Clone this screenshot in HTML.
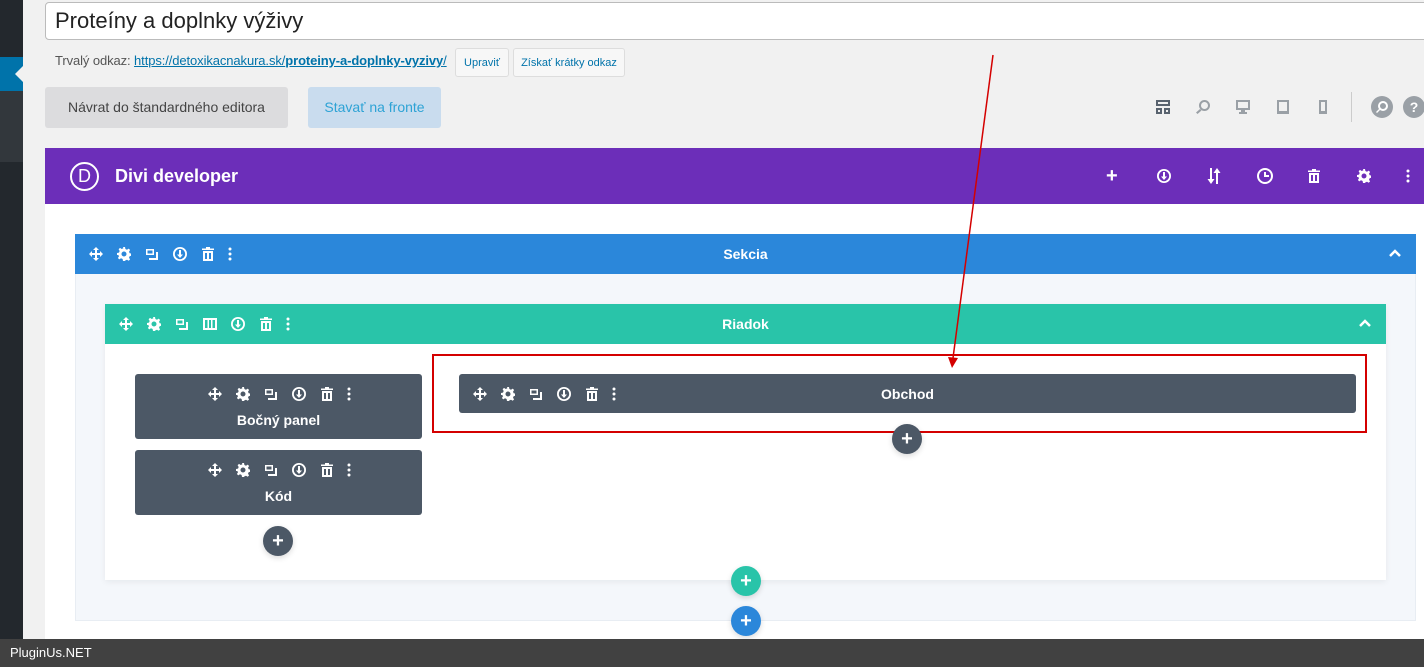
<!DOCTYPE html>
<html><head><meta charset="utf-8">
<style>
*{box-sizing:border-box;margin:0;padding:0}
body{width:1424px;height:667px;overflow:hidden;background:#f1f1f1;font-family:"Liberation Sans",sans-serif;position:relative}
.a{position:absolute}
.ic{position:absolute;width:14px;height:14px;fill:#fff}
.bar{display:flex;align-items:center;color:#fff;font-weight:bold;font-size:14px}
.plus{position:absolute;width:30px;height:30px;border-radius:50%;color:#fff;font-size:20px;font-weight:bold;text-align:center;line-height:31px;box-shadow:0 2px 6px rgba(0,0,0,.15)}
</style></head><body>
<svg width="0" height="0" style="position:absolute">
<defs>
<symbol id="mv" viewBox="0 0 14 14"><path d="M7 0l3 3H8v3h3V4l3 3-3 3V8H8v3h2l-3 3-3-3h2V8H3v2L0 7l3-3v2h3V3H4z"/></symbol>
<symbol id="gr" viewBox="0 0 14 14"><path d="M6 0h2l.4 2 1.6.7 1.7-1.1 1.4 1.4-1.1 1.7.7 1.6 2 .4v2l-2 .4-.7 1.6 1.1 1.7-1.4 1.4-1.7-1.1-1.6.7L8 14H6l-.4-2-1.6-.7-1.7 1.1-1.4-1.4 1.1-1.7L1.3 8 0 8V6l2-.4.7-1.6-1.1-1.7L3 .9l1.7 1.1L6.4 1.3zM7 4.5A2.5 2.5 0 1 0 7 9.5 2.5 2.5 0 1 0 7 4.5z" fill-rule="evenodd"/></symbol>
<symbol id="dp" viewBox="0 0 14 14"><path d="M1 2h8v6H1zM2.5 3.5v3h5v-3zM11 5h2v8H4v-2h7z" fill-rule="evenodd"/></symbol>
<symbol id="pw" viewBox="0 0 14 14"><path d="M7 0a7 7 0 1 1 0 14A7 7 0 1 1 7 0zm0 1.8a5.2 5.2 0 1 0 0 10.4A5.2 5.2 0 1 0 7 1.8zM6 3h2v4.5h2L7 11 4 7.5h2z" fill-rule="evenodd"/></symbol>
<symbol id="tr" viewBox="0 0 14 14"><path d="M5 0h4v1.5h4V3H1V1.5h4zM2 4h10v10H2zM4 6v6h2V6zM8 6v6h2V6z" fill-rule="evenodd"/></symbol>
<symbol id="dt" viewBox="0 0 14 14"><circle cx="7" cy="2" r="1.5"/><circle cx="7" cy="7" r="1.5"/><circle cx="7" cy="12" r="1.5"/></symbol>
<symbol id="col" viewBox="0 0 14 14"><path d="M0 1h14v12H0zM2 3v8h2.5V3zM6 3v8h2V3zM9.5 3v8H12V3z" fill-rule="evenodd"/></symbol>
</defs></svg>

<div class="a" style="left:0;top:0;width:23px;height:639px;background:#23282d"></div>
<div class="a" style="left:0;top:57px;width:23px;height:34px;background:#0073aa"></div>
<div class="a" style="left:15px;top:66px;width:0;height:0;border-top:8px solid transparent;border-bottom:8px solid transparent;border-right:8px solid #f1f1f1"></div>
<div class="a" style="left:0;top:91px;width:23px;height:71px;background:#32373c"></div>

<div class="a" style="left:45px;top:2px;width:1400px;height:38px;background:#fff;border:1px solid #bbb;border-radius:4px;font-size:22px;color:#222;padding:5px 9px">Proteíny a doplnky výživy</div>
<div class="a" style="left:55px;top:53px;font-size:13px;color:#555;letter-spacing:-0.1px">Trvalý odkaz: <span style="color:#0073aa;text-decoration:underline">https://detoxikacnakura.sk/<b>proteiny-a-doplnky-vyzivy</b>/</span></div>
<div class="a" style="left:455px;top:48px;width:54px;height:29px;border:1px solid #ddd;background:#f7f7f7;border-radius:3px;font-size:11px;color:#0073aa;text-align:center;line-height:28px">Upraviť</div>
<div class="a" style="left:513px;top:48px;width:112px;height:29px;border:1px solid #ddd;background:#f7f7f7;border-radius:3px;font-size:11px;color:#0073aa;text-align:center;line-height:28px">Získať krátky odkaz</div>
<div class="a" style="left:45px;top:87px;width:243px;height:41px;background:#dcdcde;border-radius:3px;font-size:14px;color:#444;text-align:center;line-height:41px">Návrat do štandardného editora</div>
<div class="a" style="left:308px;top:87px;width:133px;height:41px;background:#c9dcee;border-radius:3px;font-size:14px;color:#2ea3d5;text-align:center;line-height:41px">Stavať na fronte</div>

<svg class="a" style="left:1156px;top:100px" width="14" height="14" viewBox="0 0 14 14" fill="#59636f"><path d="M0 0h14v6H0zM2 2v2h10V2zM0 8h6v6H0zM8 8h6v6H8zM2 10v2h2v-2zM10 10v2h2v-2z" fill-rule="evenodd"/></svg>
<svg class="a" style="left:1196px;top:100px" width="14" height="14" viewBox="0 0 14 14" fill="#9aa0a6"><path d="M8.5 0a5.5 5.5 0 1 1 0 11A5.5 5.5 0 1 1 8.5 0zm0 2a3.5 3.5 0 1 0 0 7 3.5 3.5 0 1 0 0-7zM4 9l1.5 1.5L1.5 14 0 12.5z" fill-rule="evenodd"/></svg>
<svg class="a" style="left:1236px;top:100px" width="14" height="14" viewBox="0 0 14 14" fill="#9aa0a6"><path d="M0 0h14v10H0zM2 2v6h10V2zM5 10h4v2h2v2H3v-2h2z" fill-rule="evenodd"/></svg>
<svg class="a" style="left:1277px;top:100px" width="12" height="14" viewBox="0 0 12 14" fill="#9aa0a6"><path d="M0 0h12v14H0zM2 2v9h8V2z" fill-rule="evenodd"/></svg>
<svg class="a" style="left:1319px;top:100px" width="8" height="14" viewBox="0 0 8 14" fill="#9aa0a6"><path d="M0 0h8v14H0zM2 2v9h4V2z" fill-rule="evenodd"/></svg>
<div class="a" style="left:1351px;top:92px;width:1px;height:30px;background:#ccc"></div>
<div class="a" style="left:1371px;top:96px;width:22px;height:22px;border-radius:50%;background:#9aa0a6"></div>
<svg class="a" style="left:1376px;top:101px" width="12" height="12" viewBox="0 0 12 12" fill="#fff"><path d="M7 0a5 5 0 1 1 0 10A5 5 0 1 1 7 0zm0 2a3 3 0 1 0 0 6 3 3 0 1 0 0-6zM3 8l1 1-3 3-1-1z" fill-rule="evenodd"/></svg>
<div class="a" style="left:1403px;top:96px;width:22px;height:22px;border-radius:50%;background:#9aa0a6;color:#fff;font-weight:bold;font-size:14px;text-align:center;line-height:22px">?</div>

<div class="a" style="left:45px;top:148px;width:1379px;height:56px;background:#6c2eb9"></div>
<div class="a" style="left:70px;top:162px;width:29px;height:29px;border:2px solid #fff;border-radius:50%;color:#fff;font-size:18px;text-align:center;line-height:25px">D</div>
<div class="a" style="left:115px;top:166px;color:#fff;font-weight:bold;font-size:18px">Divi developer</div>
<div class="a" style="left:1106px;top:165px;color:#fff;font-weight:bold;font-size:20px">+</div>
<svg class="ic" style="left:1157px;top:169px"><use href="#pw"/></svg>
<svg class="a" style="left:1207px;top:168px" width="14" height="16" viewBox="0 0 14 16" fill="#fff"><path d="M3 0h2v11h2.5L4 16 .5 11H3zM9 16h2V5h2.5L10 0 6.5 5H9z"/></svg>
<svg class="a" style="left:1257px;top:168px" width="16" height="16" viewBox="0 0 16 16" fill="#fff"><path d="M8 0a8 8 0 1 1 0 16A8 8 0 1 1 8 0zm0 2a6 6 0 1 0 0 12A6 6 0 1 0 8 2zM7 4h2v3h3v2H7z" fill-rule="evenodd"/></svg>
<svg class="ic" style="left:1307px;top:169px"><use href="#tr"/></svg>
<svg class="ic" style="left:1357px;top:169px"><use href="#gr"/></svg>
<svg class="ic" style="left:1401px;top:167px;width:14px;height:18px" viewBox="0 0 14 14"><use href="#dt"/></svg>

<div class="a" style="left:45px;top:204px;width:1379px;height:435px;background:#fff"></div>

<div class="a" style="left:75px;top:234px;width:1341px;height:387px;background:#f4f7fb;border:1px solid #e8edf3"></div>
<div class="a bar" style="left:75px;top:234px;width:1341px;height:40px;background:#2b87da;justify-content:center">Sekcia</div>
<svg class="ic" style="left:89px;top:247px"><use href="#mv"/></svg>
<svg class="ic" style="left:117px;top:247px"><use href="#gr"/></svg>
<svg class="ic" style="left:145px;top:247px"><use href="#dp"/></svg>
<svg class="ic" style="left:173px;top:247px"><use href="#pw"/></svg>
<svg class="ic" style="left:201px;top:247px"><use href="#tr"/></svg>
<svg class="ic" style="left:223px;top:247px"><use href="#dt"/></svg>
<svg class="a" style="left:1388px;top:248px" width="14" height="10" viewBox="0 0 14 10"><path d="M2 8l5-5 5 5" stroke="#fff" stroke-width="2.5" fill="none"/></svg>

<div class="a" style="left:105px;top:304px;width:1281px;height:276px;background:#fff;box-shadow:0 2px 6px rgba(0,0,0,.06)"></div>
<div class="a bar" style="left:105px;top:304px;width:1281px;height:40px;background:#29c4a9;justify-content:center">Riadok</div>
<svg class="ic" style="left:119px;top:317px"><use href="#mv"/></svg>
<svg class="ic" style="left:147px;top:317px"><use href="#gr"/></svg>
<svg class="ic" style="left:175px;top:317px"><use href="#dp"/></svg>
<svg class="ic" style="left:203px;top:317px"><use href="#col"/></svg>
<svg class="ic" style="left:231px;top:317px"><use href="#pw"/></svg>
<svg class="ic" style="left:259px;top:317px"><use href="#tr"/></svg>
<svg class="ic" style="left:281px;top:317px"><use href="#dt"/></svg>
<svg class="a" style="left:1358px;top:318px" width="14" height="10" viewBox="0 0 14 10"><path d="M2 8l5-5 5 5" stroke="#fff" stroke-width="2.5" fill="none"/></svg>

<div class="a" style="left:135px;top:374px;width:287px;height:65px;background:#4c5866;border-radius:3px"></div>
<svg class="ic" style="left:208px;top:387px"><use href="#mv"/></svg>
<svg class="ic" style="left:236px;top:387px"><use href="#gr"/></svg>
<svg class="ic" style="left:264px;top:387px"><use href="#dp"/></svg>
<svg class="ic" style="left:292px;top:387px"><use href="#pw"/></svg>
<svg class="ic" style="left:320px;top:387px"><use href="#tr"/></svg>
<svg class="ic" style="left:342px;top:387px"><use href="#dt"/></svg>
<div class="a bar" style="left:135px;top:412px;width:287px;justify-content:center">Bočný panel</div>

<div class="a" style="left:135px;top:450px;width:287px;height:65px;background:#4c5866;border-radius:3px"></div>
<svg class="ic" style="left:208px;top:463px"><use href="#mv"/></svg>
<svg class="ic" style="left:236px;top:463px"><use href="#gr"/></svg>
<svg class="ic" style="left:264px;top:463px"><use href="#dp"/></svg>
<svg class="ic" style="left:292px;top:463px"><use href="#pw"/></svg>
<svg class="ic" style="left:320px;top:463px"><use href="#tr"/></svg>
<svg class="ic" style="left:342px;top:463px"><use href="#dt"/></svg>
<div class="a bar" style="left:135px;top:488px;width:287px;justify-content:center">Kód</div>

<div class="a bar" style="left:459px;top:374px;width:897px;height:39px;background:#4c5866;border-radius:3px;justify-content:center">Obchod</div>
<svg class="ic" style="left:473px;top:387px"><use href="#mv"/></svg>
<svg class="ic" style="left:501px;top:387px"><use href="#gr"/></svg>
<svg class="ic" style="left:529px;top:387px"><use href="#dp"/></svg>
<svg class="ic" style="left:557px;top:387px"><use href="#pw"/></svg>
<svg class="ic" style="left:585px;top:387px"><use href="#tr"/></svg>
<svg class="ic" style="left:607px;top:387px"><use href="#dt"/></svg>

<div class="a" style="left:432px;top:354px;width:935px;height:79px;border:2px solid #d40000"></div>

<div class="plus" style="left:263px;top:526px;background:#4c5866">+</div>
<div class="plus" style="left:892px;top:424px;background:#4c5866">+</div>
<div class="plus" style="left:731px;top:566px;background:#29c4a9">+</div>
<div class="plus" style="left:731px;top:606px;background:#2b87da">+</div>

<svg class="a" style="left:0;top:0" width="1424" height="667"><line x1="993" y1="55" x2="953" y2="358" stroke="#d40000" stroke-width="1.5"/><path d="M948 357l10 1-6 10z" fill="#d40000"/></svg>

<div class="a" style="left:0;top:639px;width:1424px;height:28px;background:#414141;color:#fff;font-size:13px;line-height:28px;padding-left:10px">PluginUs.NET</div>
</body></html>
